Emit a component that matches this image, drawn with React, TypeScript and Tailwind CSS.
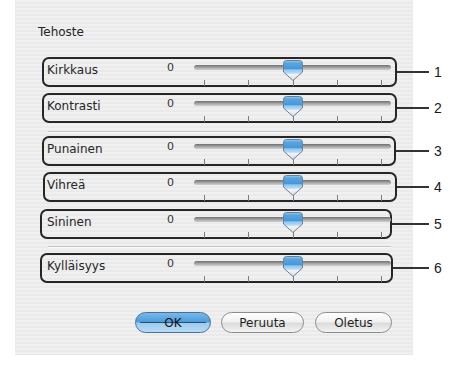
const rows = [
  { label: "Kirkkaus", n: "1", mt: "mt-[17px]", box: "ml-[4px] w-[355px] pl-[3px]" },
  { label: "Kontrasti", n: "2", mt: "mt-[6px]", box: "ml-[4px] w-[355px] pl-[3px]" },
  { label: "Punainen", n: "3", mt: "mt-[4px]", box: "ml-[4px] w-[354px] pl-[3px]", sepBefore: "mt-[8px]" },
  { label: "Vihreä", n: "4", mt: "mt-[6px]", box: "ml-[5px] w-[354px] pl-[2px]" },
  { label: "Sininen", n: "5", mt: "mt-[7px]", box: "ml-[2px] w-[352px] pl-[5px]" },
  { label: "Kylläisyys", n: "6", mt: "mt-[6px]", box: "ml-[2px] w-[353px] pl-[5px]", sepBefore: "mt-[7px]" },
];

const ticks = [10, 54, 99, 143, 187];

function Thumb() {
  return (
    <svg width="20" height="22" viewBox="0 0 20 22" className="absolute left-[89px] top-[1px]">
      <defs>
        <linearGradient id="thumbFill" x1="0" y1="0" x2="0" y2="1">
          <stop offset="0" stopColor="#9fd0f4" />
          <stop offset="0.12" stopColor="#5aa6e2" />
          <stop offset="0.42" stopColor="#4696d8" />
          <stop offset="0.46" stopColor="#8cc4ee" />
          <stop offset="0.64" stopColor="#b9dcf6" />
          <stop offset="0.68" stopColor="#f2f5f8" />
          <stop offset="1" stopColor="#d9dee3" />
        </linearGradient>
      </defs>
      <path
        d="M3.5 0.5 H16.5 Q19.5 0.5 19.5 3.5 V12 L10 20.5 L0.5 12 V3.5 Q0.5 0.5 3.5 0.5 Z"
        fill="url(#thumbFill)"
        stroke="#6c7f92"
        strokeWidth="1"
      />
    </svg>
  );
}

function Slider() {
  return (
    <div className="relative w-[197px] h-[26px] flex-none">
      <div className="absolute left-0 right-0 top-[6px] h-[5px] rounded-full bg-[linear-gradient(#6e6e6e,#a4a4a4_50%,#d2d2d2)]" />
      {ticks.map((t) => (
        <div key={t} className="absolute top-[21px] h-[6px] w-px bg-[#7c7c7c]" style={{ left: t }} />
      ))}
      <Thumb />
    </div>
  );
}

export default function App() {
  return (
    <div className="w-[450px] h-[368px] bg-white overflow-hidden font-['DejaVu_Sans',sans-serif]">
      <div className="ml-[15px] w-[398px] h-[355px] pt-[24px] pl-[23px] bg-[repeating-linear-gradient(180deg,#f0f0f0_0px,#f0f0f0_2px,#eaeaea_2px,#eaeaea_4px)]">
        <div className="h-[16px] leading-[16px] text-[12px] text-[#262626]">Tehoste</div>

        {rows.map((r) => (
          <div key={r.n}>
            {r.sepBefore && (
              <div className={`${r.sepBefore} ml-[10px] w-[343px] h-px bg-[#c4c4c4] shadow-[0_1px_0_#fafafa]`} />
            )}
            <div className={`${r.mt} flex items-center w-[410px] h-[30px]`}>
              <div className={`${r.box} h-[30px] flex-none flex items-start border-2 border-[#262626] rounded-[7px]`}>
                <div className="w-[120px] flex-none mt-[4px] text-[12px] leading-[14px] text-[#262626]">{r.label}</div>
                <div className="w-[27px] flex-none mt-[2px] text-[11px] leading-[14px] font-medium text-[#333]">0</div>
                <Slider />
              </div>
              <div className="flex-1 h-[2px] bg-[#333]" />
              <div className="ml-[5px] w-[14px] flex-none text-[14px] leading-[16px] text-[#1a1a1a] font-['Liberation_Sans',sans-serif]">
                {r.n}
              </div>
            </div>
          </div>
        ))}

        <div className="mt-[29px] ml-[97px] flex gap-[10px] text-[12px] leading-[21px]">
          <button className="relative w-[76px] h-[21px] rounded-full border border-[#4b6f92] bg-[linear-gradient(#7ab8ea,#4b9ddd_45%,#9ccbef_55%,#b8dbf5)] text-[#111]">
            <span className="absolute left-[4px] right-[4px] top-[9px] h-px bg-[#2e4e6c]" />
            <span className="relative">OK</span>
          </button>
          <button className="w-[83px] h-[21px] rounded-full border border-[#8c8c8c] bg-[linear-gradient(#ffffff,#f2f2f2_45%,#dcdcdc_55%,#f4f4f4)] text-[#1e1e1e]">
            Peruuta
          </button>
          <button className="ml-px w-[77px] h-[21px] rounded-full border border-[#8c8c8c] bg-[linear-gradient(#ffffff,#f2f2f2_45%,#dcdcdc_55%,#f4f4f4)] text-[#1e1e1e]">
            Oletus
          </button>
        </div>
      </div>
    </div>
  );
}
